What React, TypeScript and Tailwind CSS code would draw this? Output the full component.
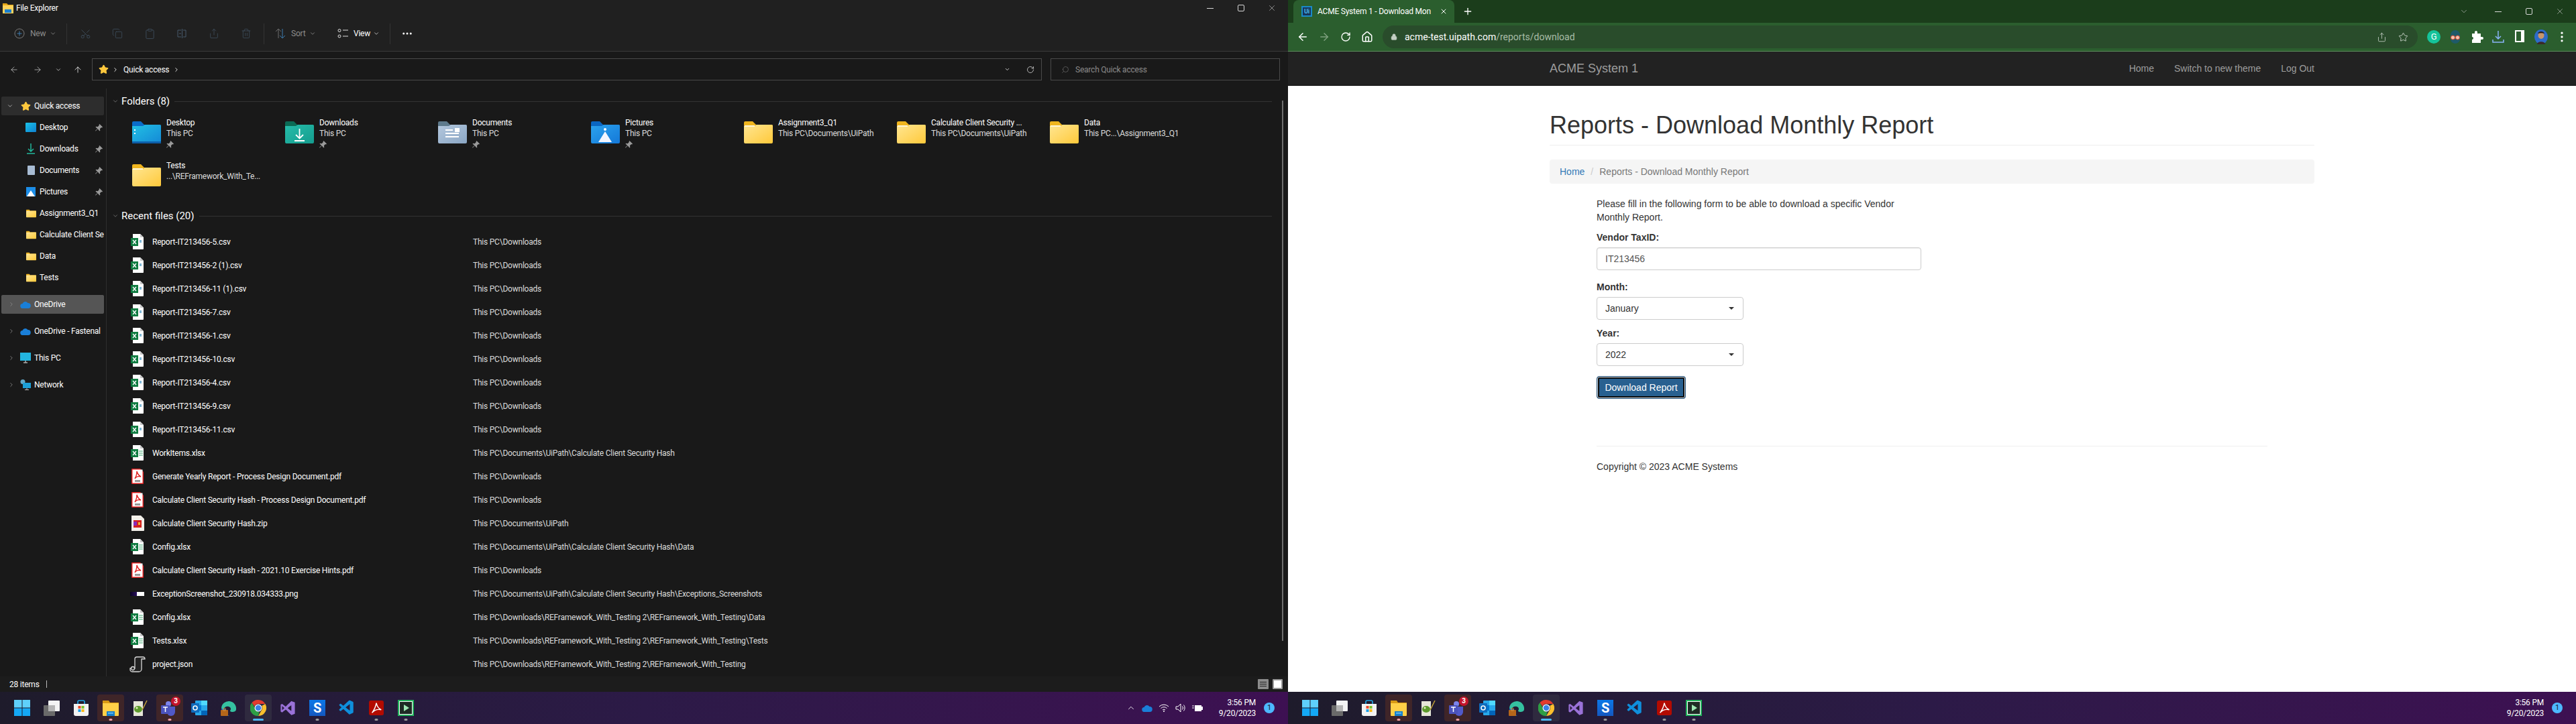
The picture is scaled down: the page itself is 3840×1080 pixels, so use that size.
import { ReactNode } from "react";
import {
  ArrowLeft,
  ArrowRight,
  ArrowUp,
  ChevronDown,
  ChevronRight,
  Copy,
  Ellipsis,
  EllipsisVertical,
  House,
  Lock,
  Plus,
  RotateCw,
  Scissors,
  Search,
  Share,
  Star,
  Trash2,
  X,
  Clipboard,
} from "lucide-react";
import { VscVscode } from "react-icons/vsc";
import { DiVisualstudio } from "react-icons/di";

const UI_FONT = "font-['Roboto','Noto_Sans',sans-serif] tracking-[-0.22px]";

type FolderKind = "desktop" | "downloads" | "documents" | "pictures" | "yellow";

function FolderIcon({ kind, small = false }: { kind: FolderKind; small?: boolean }) {
  const colors: Record<FolderKind, [string, string, string]> = {
    desktop: ["#0a6cc9", "#22c1e4", "#1488d6"],
    downloads: ["#0b6b55", "#26bdaa", "#159c8e"],
    documents: ["#5e7a8c", "#b4c8de", "#8aa6c4"],
    pictures: ["#0a66c2", "#2ba3ee", "#1478d8"],
    yellow: ["#f0b51e", "#ffe692", "#ffc93a"],
  };
  const [tab, from, to] = colors[kind];
  const id = `folder-${kind}`;
  return (
    <svg viewBox="0 0 43 33" className={small ? "w-[15px] h-[13px]" : "w-[43px] h-[33px]"}>
      <defs>
        <linearGradient id={id} x1="0" y1="0" x2="1" y2="1">
          <stop offset="0" stopColor={from} />
          <stop offset="1" stopColor={to} />
        </linearGradient>
      </defs>
      <path d="M0 2a2 2 0 0 1 2-2h11l5 5h23a2 2 0 0 1 2 2v10H0z" fill={tab} />
      <path d="M0 7h16l3-2h22a2 2 0 0 1 2 2v24a2 2 0 0 1-2 2H2a2 2 0 0 1-2-2z" fill={`url(#${id})`} />
      {kind === "yellow" && <rect x="1" y="6" width="15" height="2" fill="#fff6d8" />}
      {kind === "desktop" && (
        <>
          <rect x="3" y="12" width="2" height="2" fill="#fff" />
          <rect x="3" y="17" width="2" height="2" fill="#fff" />
          <rect x="0" y="30" width="43" height="3" fill="#0d5ea8" />
        </>
      )}
      {kind === "downloads" && (
        <path d="M21.5 11v14M16 20l5.5 5.500 5.500-5.500M14 29h15" stroke="#fff" strokeWidth="1.800" fill="none" />
      )}
      {kind === "documents" && (
        <>
          <path d="M11 13h11M11 18h20M11 23h20" stroke="#fff" strokeWidth="2" />
          <rect x="25" y="10" width="7" height="6" fill="#fff" />
        </>
      )}
      {kind === "pictures" && (
        <>
          <circle cx="21" cy="12" r="2" fill="#fff" />
          <path d="M21 15l10 16H11z" fill="#f2f6ff" />
        </>
      )}
    </svg>
  );
}

function SheetIcon({ kind }: { kind: "csv" | "xlsx" }) {
  return (
    <svg viewBox="0 0 20 23" className="w-5 h-[23px] shrink-0">
      <path d="M3 0h11l5 5v17a1 1 0 0 1-1 1H3z" fill="#fff" />
      <path d="M14 0l5 5h-5z" fill="#c8c8c8" />
      <rect x="0" y="6" width="11" height="12" fill="#107c41" />
      <path d="M3 9l5 6M8 9l-5 6" stroke="#fff" strokeWidth="1.400" />
      {kind === "csv" ? (
        <rect x="13" y="9" width="3" height="4" fill="#7fb8d8" />
      ) : (
        <path d="M12 9h6M12 12h6M12 15h6" stroke="#3ba56c" strokeWidth="1.200" />
      )}
    </svg>
  );
}

function PdfIcon() {
  return (
    <svg viewBox="0 0 20 23" className="w-5 h-[23px] shrink-0">
      <path d="M2 0h12l5 5v17a1 1 0 0 1-1 1H2a1 1 0 0 1-1-1V1a1 1 0 0 1 1-1z" fill="#e02020" />
      <rect x="2.500" y="1.500" width="15" height="20" fill="#fff" />
      <path d="M9 4c1 4 2 6 6 8-4-1-7 0-9 3 2-3 3-7 3-11z" fill="none" stroke="#e02020" strokeWidth="1.400" />
      <rect x="6" y="17" width="8" height="3" fill="#999" />
    </svg>
  );
}

function ZipIcon() {
  return (
    <svg viewBox="0 0 20 23" className="w-5 h-[23px] shrink-0">
      <path d="M1 0h14l5 5v17a1 1 0 0 1-1 1H1z" fill="#f4f0ea" />
      <rect x="4" y="7" width="12" height="11" fill="#d42020" />
      <rect x="4" y="9" width="5" height="6" fill="#8a2bb8" />
      <rect x="11" y="10" width="3" height="4" fill="#f0b030" />
    </svg>
  );
}

function ScriptIcon() {
  return (
    <svg viewBox="0 0 24 24" className="w-[24px] h-[24px] shrink-0 -ml-[1px]">
      <path d="M8 4a3 3 0 0 1 3-3h9a3 3 0 0 1 3 3h-5v15a4 4 0 0 1-4 4H4a3 3 0 0 1-3-3V18h7z" fill="#222" stroke="#d8d8d8" strokeWidth="1.300" />
      <circle cx="5" cy="18" r="2.500" fill="#222" stroke="#d8d8d8" strokeWidth="1.300" />
    </svg>
  );
}

function ThumbIcon() {
  return (
    <div className="flex w-[21px] h-[6px] shrink-0 -ml-[1px]">
      <div className="w-[10px] h-full bg-linear-to-r from-[#0a0420] to-[#2a1060]" />
      <div className="flex-1 h-full bg-white" />
    </div>
  );
}

function WinControls({ chevron = false }: { chevron?: boolean }) {
  return (
    <div className="flex items-center text-[#d8d8d8] pr-[17px]">
      {chevron && <ChevronDown className="w-[14px] h-[14px] mr-[39px]" strokeWidth={1} />}
      <div className="w-[10px] h-px bg-current" />
      <div className="w-[10px] h-[10px] border border-current rounded-[2px] ml-[36px]" />
      <X className="w-[14px] h-[14px] ml-[34px]" strokeWidth={1} />
    </div>
  );
}

function ToolIcon({ children, className = "" }: { children: ReactNode; className?: string }) {
  return <div className={`w-[48px] flex justify-center shrink-0 text-[#46596b] ${className}`}>{children}</div>;
}

function Explorer() {
  const folders: { name: string; sub: string; kind: FolderKind; pin?: boolean }[] = [
    { name: "Desktop", sub: "This PC", kind: "desktop", pin: true },
    { name: "Downloads", sub: "This PC", kind: "downloads", pin: true },
    { name: "Documents", sub: "This PC", kind: "documents", pin: true },
    { name: "Pictures", sub: "This PC", kind: "pictures", pin: true },
    { name: "Assignment3_Q1", sub: "This PC\\Documents\\UiPath", kind: "yellow" },
    { name: "Calculate Client Security ...", sub: "This PC\\Documents\\UiPath", kind: "yellow" },
    { name: "Data", sub: "This PC...\\Assignment3_Q1", kind: "yellow" },
    { name: "Tests", sub: "...\\REFramework_With_Te...", kind: "yellow" },
  ];
  const downloads = "This PC\\Downloads";
  const hash = "This PC\\Documents\\UiPath\\Calculate Client Security Hash";
  const fw = "This PC\\Downloads\\REFramework_With_Testing 2\\REFramework_With_Testing";
  const files: { name: string; path: string; icon: ReactNode }[] = [
    { name: "Report-IT213456-5.csv", path: downloads, icon: <SheetIcon kind="csv" /> },
    { name: "Report-IT213456-2 (1).csv", path: downloads, icon: <SheetIcon kind="csv" /> },
    { name: "Report-IT213456-11 (1).csv", path: downloads, icon: <SheetIcon kind="csv" /> },
    { name: "Report-IT213456-7.csv", path: downloads, icon: <SheetIcon kind="csv" /> },
    { name: "Report-IT213456-1.csv", path: downloads, icon: <SheetIcon kind="csv" /> },
    { name: "Report-IT213456-10.csv", path: downloads, icon: <SheetIcon kind="csv" /> },
    { name: "Report-IT213456-4.csv", path: downloads, icon: <SheetIcon kind="csv" /> },
    { name: "Report-IT213456-9.csv", path: downloads, icon: <SheetIcon kind="csv" /> },
    { name: "Report-IT213456-11.csv", path: downloads, icon: <SheetIcon kind="csv" /> },
    { name: "WorkItems.xlsx", path: hash, icon: <SheetIcon kind="xlsx" /> },
    { name: "Generate Yearly Report - Process Design Document.pdf", path: downloads, icon: <PdfIcon /> },
    { name: "Calculate Client Security Hash - Process Design Document.pdf", path: downloads, icon: <PdfIcon /> },
    { name: "Calculate Client Security Hash.zip", path: "This PC\\Documents\\UiPath", icon: <ZipIcon /> },
    { name: "Config.xlsx", path: `${hash}\\Data`, icon: <SheetIcon kind="xlsx" /> },
    { name: "Calculate Client Security Hash - 2021.10 Exercise Hints.pdf", path: downloads, icon: <PdfIcon /> },
    { name: "ExceptionScreenshot_230918.034333.png", path: `${hash}\\Exceptions_Screenshots`, icon: <ThumbIcon /> },
    { name: "Config.xlsx", path: `${fw}\\Data`, icon: <SheetIcon kind="xlsx" /> },
    { name: "Tests.xlsx", path: `${fw}\\Tests`, icon: <SheetIcon kind="xlsx" /> },
    { name: "project.json", path: fw, icon: <ScriptIcon /> },
  ];

  const pin = (
    <svg viewBox="0 0 12 12" className="w-[11px] h-[11px] text-[#9a9a9a] shrink-0">
      <path d="M7 0l5 5-1 1-1-.5L7.500 8 8 10.500 7 11.500 4 8 .8 11.500 0 11l3.500-3.500L.5 5l1-1L4 4.500 6.500 2 6 1z" fill="currentColor" />
    </svg>
  );

  return (
    <div className={`w-[1920px] h-[1080px] flex flex-col bg-[#191919] text-white text-[12px] shrink-0 ${UI_FONT}`}>
      <div className="h-[77px] bg-[#202020] border-b border-[#3a3a3a] flex flex-col shrink-0">
        <div className="h-[24px] flex items-center justify-between shrink-0">
          <div className="flex items-center pl-1">
            <svg viewBox="0 0 16 16" className="w-4 h-4">
              <path d="M0 1h6l2 2h8v3H0z" fill="#e8a818" />
              <path d="M0 4h16v12H0z" fill="#ffd35c" />
              <rect x="3" y="10" width="10" height="5" fill="#1a80d0" />
            </svg>
            <span className="ml-1">File Explorer</span>
          </div>
          <WinControls />
        </div>
        <div className="h-[52px] flex items-center pl-[21px] text-[#8c8c8c]">
          <svg viewBox="0 0 16 16" className="w-[16px] h-[16px] text-[#7c7c7c]" fill="none" stroke="currentColor">
            <circle cx="8" cy="8" r="7" />
            <path d="M8 4.500v7M4.500 8h7" stroke="#3d7cb0" />
          </svg>
          <span className="ml-[8px] w-[28px]">New</span>
          <ChevronDown className="w-[10px] h-[10px] ml-[1px]" />
          <div className="w-px h-[31px] bg-[#333] ml-[15px] mr-[3px]" />
          <ToolIcon><Scissors className="w-[17px] h-[17px] -rotate-90" strokeWidth={1} /></ToolIcon>
          <ToolIcon><Copy className="w-[16px] h-[16px]" strokeWidth={1} /></ToolIcon>
          <ToolIcon><Clipboard className="w-[17px] h-[17px]" strokeWidth={1} /></ToolIcon>
          <ToolIcon>
            <svg viewBox="0 0 16 16" className="w-4 h-4" fill="none" stroke="currentColor">
              <path d="M7 3H2v10h5M10 3h4v10h-4M8.500 1v14M4 8h3" />
            </svg>
          </ToolIcon>
          <ToolIcon><Share className="w-[16px] h-[16px]" strokeWidth={1} /></ToolIcon>
          <ToolIcon className="text-[#7a7a7a]"><Trash2 className="w-[16px] h-[16px]" strokeWidth={1} /></ToolIcon>
          <div className="w-px h-[31px] bg-[#333] ml-[2px] mr-[16px]" />
          <svg viewBox="0 0 16 16" className="w-[16px] h-[16px]" fill="none" strokeWidth="1">
            <path d="M5 15V1L1 5M5 1l4 4" stroke="#6e6e6e" />
            <path d="M11 1v14l4-4M11 15l-4-4" stroke="#3d7cb0" />
          </svg>
          <span className="ml-[8px] w-[24px]">Sort</span>
          <ChevronDown className="w-[10px] h-[10px] ml-[3px]" />
          <div className="w-[32px]" />
          <svg viewBox="0 0 16 16" className="w-[16px] h-[16px] text-[#dedede]" fill="none" stroke="currentColor">
            <circle cx="3" cy="3.500" r="2" />
            <circle cx="3" cy="12" r="2" />
            <path d="M8 3h8M8 12h8" />
          </svg>
          <span className="ml-[8px] w-[27px] text-white">View</span>
          <ChevronDown className="w-[10px] h-[10px] ml-[2px] text-[#cfcfcf]" />
          <div className="w-px h-[31px] bg-[#333] ml-[15px] mr-[16px]" />
          <Ellipsis className="w-[18px] h-[18px] text-white" />
        </div>
      </div>

      <div className="h-[55px] flex pt-[10px] shrink-0">
        <div className="w-[137px] h-[33px] flex items-center pl-[14px] text-[#c8c8c8] shrink-0">
          <ArrowLeft className="w-[14px] h-[14px]" strokeWidth={1.300} />
          <ArrowRight className="w-[14px] h-[14px] ml-[21px]" strokeWidth={1.300} />
          <ChevronDown className="w-[10px] h-[10px] ml-[19px]" />
          <ArrowUp className="w-[14px] h-[14px] ml-[17px] text-white" strokeWidth={1.300} />
        </div>
        <div className="w-[1416px] h-[33px] border border-[#4a4a4a] bg-[#191919] flex items-center pl-[9px] pr-[10px] shrink-0">
          <Star className="w-[15px] h-[15px] text-[#ffc83d]" fill="currentColor" />
          <ChevronRight className="w-[10px] h-[10px] ml-[5px]" />
          <span className="ml-[7px]">Quick access</span>
          <ChevronRight className="w-[10px] h-[10px] ml-[6px]" />
          <ChevronDown className="w-[9px] h-[9px] ml-auto mr-[24px]" />
          <RotateCw className="w-[12px] h-[12px]" strokeWidth={1.300} />
        </div>
        <div className="w-[342px] h-[33px] ml-[13px] border border-[#4a4a4a] bg-[#191919] flex items-center pl-[15px] text-[#8a8a8a] shrink-0">
          <Search className="w-[12px] h-[12px] -scale-x-100" strokeWidth={1} />
          <span className="ml-[9px]">Search Quick access</span>
        </div>
      </div>

      <div className="flex-1 flex min-h-0 relative">
        <div className="w-[158px] border-r border-[#2e2e2e] shrink-0 pt-[12px] box-content">
          <div className="h-[28px] mx-[2px] w-[153px] bg-[#2d2d2d] rounded-[2px] flex items-center pl-[8px]">
            <ChevronDown className="w-[10px] h-[10px] text-[#bdbdbd]" />
            <Star className="w-[15px] h-[15px] ml-[11px] text-[#ffc83d]" fill="currentColor" />
            <span className="ml-[5px] whitespace-nowrap">Quick access</span>
          </div>
          <div className="h-[2px]" />
          {[
            { name: "Desktop", pin: true, icon: <div className="w-[16px] h-[14px] bg-linear-to-br from-[#1cc3e8] to-[#1280d0] rounded-[1px]" /> },
            {
              name: "Downloads",
              pin: true,
              icon: (
                <svg viewBox="0 0 16 16" className="w-4 h-4" fill="none" stroke="#22b89c" strokeWidth="1.500">
                  <path d="M8 0v12M4 8l4 4 4-4M2 15h12" />
                </svg>
              ),
            },
            { name: "Documents", pin: true, icon: <div className="w-[11px] h-[14px] bg-[#a8bcd4] rounded-[1px]" /> },
            {
              name: "Pictures",
              pin: true,
              icon: (
                <svg viewBox="0 0 14 14" className="w-[14px] h-[14px]">
                  <rect width="14" height="14" fill="#1c8ee8" />
                  <path d="M7 5l6 9H1z" fill="#fff" />
                </svg>
              ),
            },
            { name: "Assignment3_Q1", icon: <FolderIcon kind="yellow" small /> },
            { name: "Calculate Client Se", icon: <FolderIcon kind="yellow" small /> },
            { name: "Data", icon: <FolderIcon kind="yellow" small /> },
            { name: "Tests", icon: <FolderIcon kind="yellow" small /> },
          ].map((item) => (
            <div key={item.name} className="h-[32px] flex items-center pl-[38px]">
              <div className="w-[16px] flex justify-center shrink-0">{item.icon}</div>
              <span className="ml-[5px] whitespace-nowrap">{item.name}</span>
              {item.pin && <div className="ml-auto mr-[5px]">{pin}</div>}
            </div>
          ))}
          <div className="h-[10px]" />
          {[
            { name: "OneDrive", active: true, icon: <Cloud /> },
            { name: "OneDrive - Fastenal", icon: <Cloud /> },
            {
              name: "This PC",
              icon: (
                <svg viewBox="0 0 16 16" className="w-4 h-4">
                  <rect width="16" height="12" fill="#23b5e0" />
                  <path d="M5 15h6M8 12v3" stroke="#aaa" strokeWidth="1.500" />
                </svg>
              ),
            },
            {
              name: "Network",
              icon: (
                <svg viewBox="0 0 16 16" className="w-4 h-4">
                  <circle cx="4" cy="3.500" r="3.500" fill="#62a8c8" />
                  <rect x="4" y="5" width="12" height="8" fill="#1ca0d8" />
                  <path d="M7 15.500h6M10 13v2" stroke="#bbb" />
                </svg>
              ),
            },
          ].map((item) => (
            <div
              key={item.name}
              className={`flex items-center pl-[10px] ${item.active ? "h-[28px] mx-[2px] w-[153px] bg-[#555] rounded-[2px] mb-[6px]" : "h-[40px] pl-[12px]"}`}
            >
              <ChevronRight className="w-[10px] h-[10px] text-[#8a8a8a] shrink-0" />
              <div className="w-[16px] ml-[8px] flex justify-center shrink-0">{item.icon}</div>
              <span className="ml-[5px] whitespace-nowrap">{item.name}</span>
            </div>
          ))}
        </div>

        <div className="flex-1 min-w-0 pr-[24px] pt-[9px]">
          <SectionHeader title="Folders (8)" />
          <div className="grid grid-cols-[repeat(7,228px)] auto-rows-[64px] ml-[38px] mt-[14px]">
            {folders.map((f) => (
              <div key={f.name} className="flex items-start">
                <div className="pt-[6px] shrink-0">
                  <FolderIcon kind={f.kind} />
                </div>
                <div className="ml-[8px] leading-[16px] whitespace-nowrap">
                  <div>{f.name}</div>
                  <div className="text-[#dcdcdc]">{f.sub}</div>
                  {f.pin && <div className="h-[16px] flex items-center">{pin}</div>}
                </div>
              </div>
            ))}
          </div>
          <div className="mt-[9px]">
            <SectionHeader title="Recent files (20)" />
          </div>
          <div className="pl-[36px] mt-[11px]">
            {files.map((f, i) => (
              <div key={`${f.name}-${i}`} className="h-[35px] flex items-center whitespace-nowrap">
                <div className="w-[20px] flex justify-center shrink-0">{f.icon}</div>
                <span className="ml-[12px] w-[478px] shrink-0">{f.name}</span>
                <span className="text-[#dcdcdc]">{f.path}</span>
              </div>
            ))}
          </div>
        </div>
        <div className="absolute right-[7px] top-[18px] w-[2px] h-[806px] bg-[#6e6e6e]" />
      </div>

      <div className="h-[23px] bg-[#1c1c1c] flex items-center pl-[14px] pr-[8px] shrink-0">
        <span>28 items</span>
        <div className="w-px h-[11px] bg-[#bbb] ml-[10px]" />
        <div className="ml-auto w-[16px] h-[15px] bg-[#8c8c8c] rounded-[1px] flex flex-col justify-center gap-[2px] px-[3px]">
          <div className="h-px bg-[#222]" />
          <div className="h-px bg-[#222]" />
          <div className="h-px bg-[#222]" />
        </div>
        <div className="ml-[6px] w-[15px] h-[15px] border-[2px] border-[#999] bg-white rounded-[1px]" />
      </div>
      <Taskbar tray />
    </div>
  );
}

function Cloud() {
  return (
    <svg viewBox="0 0 16 11" className="w-4 h-[11px]">
      <path d="M4 11a3.500 3.500 0 0 1-.5-7A4.500 4.500 0 0 1 11.500 3a3.500 3.500 0 0 1 .5 8z" fill="#1a7fd8" />
    </svg>
  );
}

function SectionHeader({ title }: { title: string }) {
  return (
    <div className="h-[20px] flex items-center pl-[8px]">
      <ChevronDown className="w-[10px] h-[10px] text-[#777]" />
      <span className="ml-[4px] text-[15px] tracking-normal whitespace-nowrap">{title}</span>
      <div className="flex-1 h-px bg-[#333] ml-[7px]" />
    </div>
  );
}

function TaskSlot({
  children,
  highlight,
  dot,
}: {
  children: ReactNode;
  highlight?: string;
  dot?: string;
}) {
  return (
    <div className="w-[44px] h-full relative flex items-center justify-center shrink-0">
      {highlight && <div className={`absolute top-[4px] left-[2px] w-[40px] h-[40px] rounded-[4px] ${highlight}`} />}
      <div className="relative w-[24px] h-[24px] flex items-center justify-center">{children}</div>
      {dot && <div className={`absolute bottom-[5px] left-1/2 -translate-x-1/2 h-[3px] rounded-full ${dot}`} />}
    </div>
  );
}

function Taskbar({ tray = false }: { tray?: boolean }) {
  return (
    <div className={`h-[48px] w-[1920px] flex items-stretch pl-[11px] bg-linear-to-r from-[#1e1b2b] via-[#2c1a47] to-[#3d1052] text-white shrink-0 ${UI_FONT}`}>
      <TaskSlot>
        <svg viewBox="0 0 24 24" className="w-6 h-6">
          <path d="M0 0h11.500v11.500H0zM12.500 0H24v11.500H12.500z" fill="#5fd0fb" />
          <path d="M0 12.500h11.500V24H0zM12.500 12.500H24V24H12.500z" fill="#14a8f5" />
        </svg>
      </TaskSlot>
      <TaskSlot>
        <svg viewBox="0 0 24 24" className="w-6 h-6">
          <rect x="7" y="1" width="17" height="16" rx="1" fill="#f4f4f4" />
          <rect x="0" y="8" width="17" height="16" rx="1" fill="#6a6a6a" />
          <rect x="7" y="8" width="10" height="9" fill="#b4b4b4" />
        </svg>
      </TaskSlot>
      <TaskSlot>
        <svg viewBox="0 0 24 24" className="w-6 h-6">
          <path d="M7 6V3a2 2 0 0 1 2-2h6a2 2 0 0 1 2 2v3" stroke="#1fa8e8" strokeWidth="1.600" fill="none" />
          <path d="M1 6h22v15a3 3 0 0 1-3 3H4a3 3 0 0 1-3-3z" fill="#f2f2f2" />
          <rect x="7.500" y="9" width="4" height="4" fill="#e84a2a" />
          <rect x="12.500" y="9" width="4" height="4" fill="#7cc42c" />
          <rect x="7.500" y="14" width="4" height="4" fill="#1ca0e8" />
          <rect x="12.500" y="14" width="4" height="4" fill="#fcb814" />
        </svg>
      </TaskSlot>
      <TaskSlot highlight="bg-[#3f2528]" dot="w-[5px] bg-[#f0a0a8]">
        <svg viewBox="0 0 24 24" className="w-6 h-6">
          <path d="M0 1h9l2 3h13v4H0z" fill="#d89a14" />
          <path d="M0 5h24v18a1 1 0 0 1-1 1H1a1 1 0 0 1-1-1z" fill="#ffd048" />
          <path d="M6 17h12v7H6z" fill="#1580cc" />
          <rect x="8" y="19" width="8" height="1.500" fill="#7cc6f0" />
        </svg>
      </TaskSlot>
      <TaskSlot>
        <svg viewBox="0 0 24 24" className="w-6 h-6">
          <path d="M2 2h14v22H2z" fill="#e6e6d8" />
          <ellipse cx="9" cy="14" rx="6" ry="5" fill="#5c9a2c" />
          <circle cx="7" cy="12" r="1.500" fill="#e8f4c0" />
          <path d="M15 15L22 1" stroke="#c0a038" strokeWidth="1.500" />
        </svg>
      </TaskSlot>
      <TaskSlot highlight="bg-[#3f2528]" dot="w-[5px] bg-[#f0a0a8]">
        <svg viewBox="0 0 28 26" className="w-[28px] h-[26px] absolute -top-[1px] -left-[2px]">
          <circle cx="12" cy="7" r="4" fill="#7b83eb" />
          <path d="M10 11h12v8a6 6 0 0 1-12 0z" fill="#5059c9" />
          <rect x="1" y="9" width="13" height="13" rx="1" fill="#4b53bc" />
          <path d="M4 12h7M7.500 12v7" stroke="#fff" strokeWidth="1.500" />
        </svg>
        <span className="absolute -top-[5px] -right-[4px] w-[14px] h-[14px] rounded-full bg-[#c4142c] text-[10px] leading-[14px] text-center font-bold">3</span>
      </TaskSlot>
      <TaskSlot>
        <svg viewBox="0 0 24 24" className="w-6 h-6">
          <rect x="6" y="1" width="18" height="22" rx="1" fill="#28a8ea" />
          <rect x="15" y="1" width="9" height="7" fill="#50d9ff" />
          <rect x="6" y="8" width="9" height="8" fill="#0078d4" />
          <rect x="15" y="16" width="9" height="7" fill="#0364b8" />
          <rect x="0" y="5" width="12" height="14" rx="1" fill="#0f6cbd" />
          <circle cx="6" cy="12" r="3" fill="none" stroke="#fff" strokeWidth="1.500" />
        </svg>
      </TaskSlot>
      <TaskSlot>
        <svg viewBox="0 0 24 24" className="w-6 h-6">
          <path d="M1 12a11 11 0 0 1 22 2c0 3-3 4-6 4-2 0-3-1-3-2 2-2 1-5-2-6-4-1-7 1-8 5-1-1-3-1-3-3z" fill="#35c1a0" />
          <path d="M1 12c0 6 5 12 12 12-4-2-6-6-5-10-3 0-6 0-7-2z" fill="#1670d0" />
          <rect x="0" y="15" width="11" height="9" rx="1" fill="#b5661a" />
          <rect x="4" y="13" width="3" height="3" fill="none" stroke="#d8923a" />
        </svg>
      </TaskSlot>
      <TaskSlot highlight="bg-[#2f2a3f]" dot="w-[16px] bg-[#4db8f8]">
        <svg viewBox="0 0 24 24" className="w-6 h-6">
          <path d="M12 0a12 12 0 0 1 10.400 6H12a6 6 0 0 0-5.600 3.800L2.400 4.200A12 12 0 0 1 12 0z" fill="#e33b2e" />
          <path d="M22.400 6A12 12 0 0 1 12 24l5.200-9a6 6 0 0 0 0-6z" fill="#fbc02d" />
          <path d="M12 24A12 12 0 0 1 2.400 4.200l5 8.800a6 6 0 0 0 6 5z" fill="#2e9e45" />
          <circle cx="12" cy="12" r="5.500" fill="#fff" />
          <circle cx="12" cy="12" r="4.300" fill="#3b82e8" />
        </svg>
      </TaskSlot>
      <TaskSlot>
        <DiVisualstudio className="w-[30px] h-[30px] text-[#9a72d8] shrink-0" />
      </TaskSlot>
      <TaskSlot dot="w-[5px] bg-[#9a9a9a]">
        <div className="w-6 h-6 bg-linear-to-b from-[#0a78e8] to-[#1458c0] text-white text-[20px] leading-6 text-center font-bold">S</div>
      </TaskSlot>
      <TaskSlot>
        <VscVscode className="w-[26px] h-[26px] text-[#0f8fdc] shrink-0" />
      </TaskSlot>
      <TaskSlot dot="w-[5px] bg-[#9a9a9a]">
        <svg viewBox="0 0 24 24" className="w-[22px] h-[22px]">
          <rect width="24" height="24" rx="3" fill="#b30b00" />
          <path d="M12 4c1 5 3 9 8 11-5-1-11 0-15 5 3-4 6-10 7-16z" fill="none" stroke="#fff" strokeWidth="1.600" />
        </svg>
      </TaskSlot>
      <TaskSlot dot="w-[5px] bg-[#9a9a9a]">
        <svg viewBox="0 0 24 24" className="w-6 h-6">
          <rect width="24" height="24" fill="#22b35c" />
          <rect x="2.500" y="2.500" width="19" height="19" fill="#1e2a24" stroke="#fff" strokeWidth="1" />
          <path d="M9 7l8 5-8 5z" fill="#9fe8b4" />
        </svg>
      </TaskSlot>

      <div className="ml-auto flex items-center pr-[20px]">
        {tray && (
          <div className="flex items-center mr-[24px] gap-[9px]">
            <ChevronDown className="w-[14px] h-[14px] rotate-180" strokeWidth={1.500} />
            <Cloud />
            <svg viewBox="0 0 16 12" className="w-[16px] h-[12px]" fill="none" stroke="#fff" strokeWidth="1">
              <path d="M1 4a10 10 0 0 1 14 0M3.500 6.500a6.500 6.500 0 0 1 9 0M6 9a3 3 0 0 1 4 0" />
              <circle cx="8" cy="11" r=".6" fill="#fff" />
            </svg>
            <svg viewBox="0 0 16 14" className="w-[16px] h-[14px]" fill="none" stroke="#fff" strokeWidth="1">
              <path d="M1 5h3l4-4v12L4 9H1zM10.500 4.500a4 4 0 0 1 0 5M12.500 2.500a7 7 0 0 1 0 9" />
            </svg>
            <svg viewBox="0 0 16 12" className="w-[16px] h-[12px]">
              <path d="M0 3h3M0 6h3" stroke="#fff" />
              <rect x="4" y="2" width="10" height="9" fill="#fff" />
              <rect x="14" y="4" width="2" height="5" fill="#fff" />
            </svg>
          </div>
        )}
        <div className="text-right text-[12px] leading-[16px] whitespace-nowrap">
          <div>3:56 PM</div>
          <div>9/20/2023</div>
        </div>
        <div className="w-[16px] h-[16px] ml-[12px] rounded-full bg-[#4db8ff] text-[#1a1a2a] text-[11px] leading-[16px] text-center">1</div>
      </div>
    </div>
  );
}

function Browser() {
  return (
    <div className="w-[1920px] h-[1080px] flex flex-col shrink-0 font-['Liberation_Sans',Arial,sans-serif]">
      <div className={`h-[34px] bg-[#1b3d1b] flex shrink-0 text-white ${UI_FONT}`}>
        <div className="w-[240px] ml-[8px] bg-[#2b5e2e] rounded-t-[8px] flex items-center pl-[12px] text-[12px] shrink-0">
          <div className="w-[16px] h-[16px] border-[2px] border-[#1a8ac8] bg-[#16355c] text-[#4ab8e8] text-[9px] leading-[12px] text-center font-bold shrink-0">Ui</div>
          <span className="ml-[8px] w-[180px] whitespace-nowrap">ACME System 1 - Download Mon</span>
          <X className="w-[12px] h-[12px] ml-[2px] shrink-0" />
        </div>
        <div className="w-[44px] flex items-center justify-center shrink-0">
          <Plus className="w-[16px] h-[16px] -ml-[4px]" />
        </div>
        <div className="ml-auto flex items-center">
          <WinControls chevron />
        </div>
      </div>
      <div className={`h-[43px] bg-[#2b5e2e] border-b border-[#5c8a5c] flex items-center text-white shrink-0 ${UI_FONT}`}>
        <div className="w-[141px] flex items-center pl-[13px] shrink-0">
          <ArrowLeft className="w-[18px] h-[18px]" strokeWidth={2} />
          <ArrowRight className="w-[18px] h-[18px] ml-[14px] text-[#7fa07f]" strokeWidth={2} />
          <RotateCw className="w-[16px] h-[16px] ml-[15px]" strokeWidth={2} />
          <House className="w-[18px] h-[18px] ml-[15px]" strokeWidth={2} />
        </div>
        <div className="w-[1543px] h-[34px] rounded-full bg-[#294c2b] flex items-center pl-[12px] pr-[12px] text-[14px] tracking-normal shrink-0">
          <Lock className="w-[10px] h-[12px] text-[#c4cfc4]" fill="currentColor" />
          <span className="ml-[11px]">acme-test.uipath.com</span>
          <span className="text-[#a8bca8]">/reports/download</span>
          <Share className="w-[15px] h-[15px] ml-auto text-[#c8d2c8]" strokeWidth={1.300} />
          <Star className="w-[15px] h-[15px] ml-[17px] mr-[2px] text-[#c8d2c8]" strokeWidth={1.500} />
        </div>
        <div className="flex items-center pl-[14px] gap-[12px]">
          <div className="w-[20px] h-[20px] rounded-full bg-[#15c39a] text-[13px] leading-[20px] text-center">G</div>
          <svg viewBox="0 0 20 20" className="w-[20px] h-[20px]">
            <path d="M10 0a7 7 0 0 1 7 7v6a7 7 0 0 1-14 0V7a7 7 0 0 1 7-7z" fill="#1f5a6a" />
            <circle cx="6.500" cy="11" r="3" fill="#f4c4b4" stroke="#d84a2a" />
            <circle cx="13.500" cy="11" r="3" fill="#f4c4b4" stroke="#d84a2a" />
          </svg>
          <svg viewBox="0 0 20 20" className="w-[20px] h-[20px]">
            <path d="M3 5h4V3a2 2 0 0 1 4 0v2h5v5h2a2 2 0 0 1 0 4h-2v5H3v-5a2 2 0 0 0 0-4z" fill="#fff" />
          </svg>
          <svg viewBox="0 0 20 20" className="w-[20px] h-[20px]" fill="none" stroke="#8ab4f8" strokeWidth="1.500">
            <path d="M10 1v12M6 9l4 4 4-4M2 14v4h16v-4" />
          </svg>
          <div className="w-[20px] h-[20px] flex justify-center">
            <div className="w-[14px] h-[18px] border-[2px] border-white border-r-[5px] bg-[#2b5e2e]" />
          </div>
          <svg viewBox="0 0 20 22" className="w-[20px] h-[22px]">
            <ellipse cx="10" cy="11" rx="10" ry="11" fill="#2d6bc8" />
            <ellipse cx="10" cy="9" rx="4.500" ry="5" fill="#c8966c" />
            <path d="M5 6c1-4 9-4 10 0-3-1-7-1-10 0z" fill="#2a1c14" />
            <path d="M4 22c0-5 12-5 12 0z" fill="#3a2a28" />
          </svg>
          <EllipsisVertical className="w-[20px] h-[20px] -ml-[1px]" />
        </div>
      </div>

      <div className="h-[51px] bg-[#222] border-b border-[#080808] flex justify-center shrink-0">
        <div className="w-[1140px] flex items-center text-[#9d9d9d]">
          <span className="text-[18px]">ACME System 1</span>
          <div className="ml-auto flex text-[14px]">
            <span>Home</span>
            <span className="ml-[30px]">Switch to new theme</span>
            <span className="ml-[30px]">Log Out</span>
          </div>
        </div>
      </div>

      <div className="flex-1 bg-white flex justify-center min-h-0 text-[14px] leading-[20px] text-[#333]">
        <div className="w-[1140px]">
          <h1 className="text-[36px] leading-[40px] text-[#333] mt-[39px] pb-[9px] mb-[21px] border-b border-[#eee] h-[50px]">
            Reports - Download Monthly Report
          </h1>
          <div className="h-[36px] bg-[#f5f5f5] rounded-[4px] flex items-center px-[15px] text-[#777]">
            <span className="text-[#337ab7]">Home</span>
            <span className="text-[#ccc] px-[9px]">/</span>
            <span>Reports - Download Monthly Report</span>
          </div>
          <div className="ml-[70px] mr-[70px] pt-[20px]">
            <p className="w-[484px]">Please fill in the following form to be able to download a specific Vendor Monthly Report.</p>
            <label className="block font-bold mt-[10px] mb-[5px]">Vendor TaxID:</label>
            <input
              readOnly
              defaultValue="IT213456"
              className="block w-[484px] h-[34px] px-[12px] border border-[#ccc] rounded-[4px] text-[#555] shadow-[inset_0_1px_1px_rgba(0,0,0,0.075)] outline-none"
            />
            <label className="block font-bold mt-[15px] mb-[5px]">Month:</label>
            <FakeSelect value="January" />
            <label className="block font-bold mt-[10px] mb-[5px]">Year:</label>
            <FakeSelect value="2022" />
            <button className="block mt-[15px] w-[133px] h-[34px] rounded-[4px] bg-[#286090] border border-[#204d74] shadow-[inset_0_0_0_1px_#d8e0e8,inset_0_0_0_3px_#0b0b0b] text-white">
              Download Report
            </button>
            <hr className="mt-[70px] border-[#eee]" />
            <p className="mt-[20px] text-[#333]">Copyright © 2023 ACME Systems</p>
          </div>
        </div>
      </div>
      <Taskbar />
    </div>
  );
}

function FakeSelect({ value }: { value: string }) {
  return (
    <div className="w-[219px] h-[34px] px-[12px] border border-[#ccc] rounded-[4px] flex items-center justify-between text-[#333]">
      <span>{value}</span>
      <div className="w-0 h-0 border-x-[4px] border-x-transparent border-t-[4px] border-t-[#333] mr-[1px]" />
    </div>
  );
}

export default function App() {
  return (
    <div className="flex w-[3840px] h-[1080px] overflow-hidden">
      <Explorer />
      <Browser />
    </div>
  );
}
